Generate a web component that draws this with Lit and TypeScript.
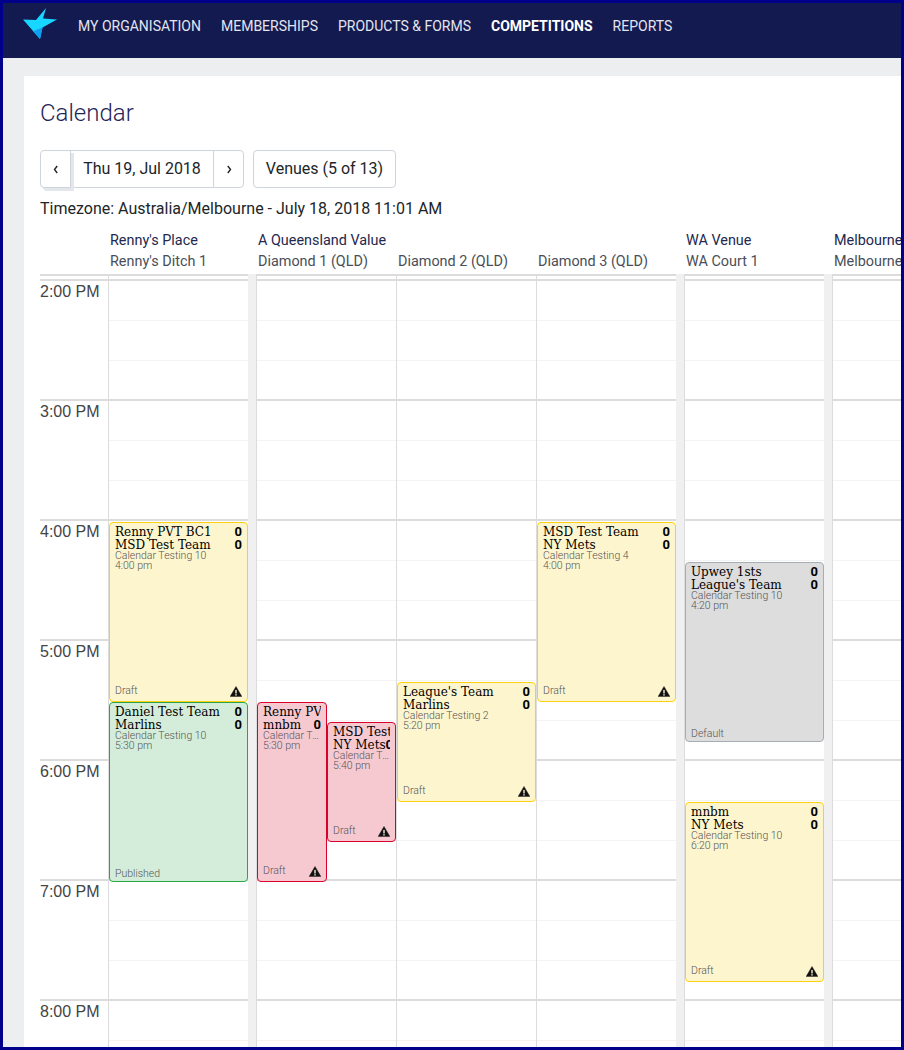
import { LitElement, html, css, svg } from "lit";
import { customElement } from "lit/decorators.js";

type CalEvent = {
  home: string;
  away: string;
  division: string;
  time: string;
  status: string;
  kind: "draft" | "published" | "clash" | "default";
  top: number;
  height: number;
  left?: number;
  width?: number;
  warn?: boolean;
};

type Court = { venue: string; name: string; gap?: boolean; events: CalEvent[] };

const courts: Court[] = [
  {
    venue: "Renny's Place",
    name: "Renny's Ditch 1",
    gap: true,
    events: [
      { home: "Renny PVT BC1", away: "MSD Test Team", division: "Calendar Testing 10", time: "4:00 pm", status: "Draft", kind: "draft", top: 241, height: 180, warn: true },
      { home: "Daniel Test Team", away: "Marlins", division: "Calendar Testing 10", time: "5:30 pm", status: "Published", kind: "published", top: 421, height: 180 },
    ],
  },
  {
    venue: "A Queensland Value",
    name: "Diamond 1 (QLD)",
    events: [
      { home: "Renny PVT BC1", away: "mnbm", division: "Calendar Testing 10", time: "5:30 pm", status: "Draft", kind: "clash", top: 421, height: 180, width: 70, warn: true },
      { home: "MSD Test Team", away: "NY Mets", division: "Calendar Testing 10", time: "5:40 pm", status: "Draft", kind: "clash", top: 441, height: 120, left: 70, width: 69, warn: true },
    ],
  },
  {
    venue: "",
    name: "Diamond 2 (QLD)",
    events: [
      { home: "League's Team", away: "Marlins", division: "Calendar Testing 2", time: "5:20 pm", status: "Draft", kind: "draft", top: 401, height: 120, warn: true },
    ],
  },
  {
    venue: "",
    name: "Diamond 3 (QLD)",
    gap: true,
    events: [
      { home: "MSD Test Team", away: "NY Mets", division: "Calendar Testing 4", time: "4:00 pm", status: "Draft", kind: "draft", top: 241, height: 180, warn: true },
    ],
  },
  {
    venue: "WA Venue",
    name: "WA Court 1",
    gap: true,
    events: [
      { home: "Upwey 1sts", away: "League's Team", division: "Calendar Testing 10", time: "4:20 pm", status: "Default", kind: "default", top: 281, height: 180 },
      { home: "mnbm", away: "NY Mets", division: "Calendar Testing 10", time: "6:20 pm", status: "Draft", kind: "draft", top: 521, height: 180, warn: true },
    ],
  },
  { venue: "Melbourne Sports Centre", name: "Melbourne Court 1", events: [] },
];

const hours = ["2:00 PM", "3:00 PM", "4:00 PM", "5:00 PM", "6:00 PM", "7:00 PM", "8:00 PM"];

const warnIcon = svg`<svg class="warn" viewBox="0 0 12 11" width="12" height="11"><path d="M6 .4 11.9 10.6H.1Z" fill="#111" stroke="#111" stroke-width=".4" stroke-linejoin="round"/><rect x="5.3" y="3.9" width="1.4" height="3.6" fill="#f3f0d8"/><rect x="5.3" y="8.2" width="1.4" height="1.4" fill="#f3f0d8"/></svg>`;

const chevron = (d: string) =>
  svg`<svg viewBox="0 0 6 9" width="6" height="9"><path d=${d} fill="none" stroke="#212529" stroke-width="1.4"/></svg>`;

@customElement("app-root")
class AppRoot extends LitElement {
  renderEvent(e: CalEvent) {
    const pos = `top:${e.top}px;height:${e.height}px;left:${e.left ?? 0}px;width:${e.width ?? 139}px`;
    return html`
      <div class="event ${e.kind}" style=${pos}>
        <div class="team"><span>${e.home}</span><b>0</b></div>
        <div class="team"><span>${e.away}</span><b>0</b></div>
        <div class="sub first">${e.division}</div>
        <div class="sub">${e.time}</div>
        <div class="foot ${e.warn ? "warned" : ""}"><span>${e.status}</span>${e.warn ? warnIcon : ""}</div>
      </div>
    `;
  }

  render() {
    return html`
      <div class="frame">
        <header>
          <svg class="logo" viewBox="0 0 36 34" width="36" height="34">
            <path d="M23 0 20 10.5 34 11.5 19.5 19.5 17 31 0 11.5 13 12Z" fill="#17d6ff" />
            <path d="M19.5 19.5 17 31 10 23.2Z" fill="#0e9ff2" />
          </svg>
          <nav>
            <a>MY ORGANISATION</a>
            <a>MEMBERSHIPS</a>
            <a>PRODUCTS &amp; FORMS</a>
            <a class="on">COMPETITIONS</a>
            <a>REPORTS</a>
          </nav>
        </header>
        <main>
          <section class="card">
            <h1>Calendar</h1>
            <div class="toolbar">
              <div class="group">
                <button class="arrow first">${chevron("M4.2 1 1.5 4.5 4.2 8")}</button>
                <button class="date">Thu 19, Jul 2018</button>
                <button class="arrow">${chevron("M1.8 1 4.5 4.5 1.8 8")}</button>
              </div>
              <button class="venues">Venues (5 of 13)</button>
            </div>
            <div class="tz">Timezone: Australia/Melbourne - July 18, 2018 11:01 AM</div>
            <div class="heads">
              <div class="corner"></div>
              ${courts.map(
                (c) => html`
                  <div class="head ${c.gap ? "gap" : ""}">
                    <div class="venue">${c.venue}</div>
                    <div class="court">${c.name}</div>
                  </div>
                `
              )}
            </div>
            <div class="grid">
              <div class="times">
                ${hours.map((h) => html`<div class="hour">${h}</div>`)}
              </div>
              ${courts.map(
                (c) => html`
                  <div class="col ${c.gap ? "gap" : ""}">
                    <div class="body">
                      ${hours.map(
                        () => html`<div class="slot"></div><div class="slot"></div><div class="slot"></div>`
                      )}
                      ${c.events.map((e) => this.renderEvent(e))}
                    </div>
                  </div>
                `
              )}
            </div>
          </section>
        </main>
      </div>
    `;
  }

  static styles = css`
    :host {
      display: block;
      font-family: Roboto, "Liberation Sans", sans-serif;
      color: #212529;
    }
    .frame {
      box-sizing: border-box;
      width: 904px;
      height: 1050px;
      border: 3px solid #00008b;
      background: #edeef0;
      overflow: hidden;
    }
    header {
      height: 55px;
      background: #131a50;
      display: flex;
      align-items: flex-start;
      padding-left: 20px;
    }
    .logo {
      margin-top: 5px;
      flex: none;
    }
    nav {
      display: flex;
      gap: 20px;
      margin-left: 19px;
      padding-top: 15px;
      font-size: 14px;
      line-height: 17px;
      color: #e4e5ee;
      white-space: nowrap;
    }
    nav a.on {
      font-weight: 700;
      color: #fff;
    }
    main {
      padding: 18px 0 0 21px;
    }
    .card {
      background: #fff;
      padding: 0 0 0 16px;
      height: 1000px;
      overflow: hidden;
    }
    h1 {
      margin: 0;
      padding-top: 22px;
      font-size: 24px;
      line-height: 30px;
      font-weight: 300;
      color: #1f2557;
    }
    .toolbar {
      display: flex;
      gap: 9px;
      margin-top: 22px;
    }
    .group {
      display: flex;
    }
    button {
      font: inherit;
      font-size: 16px;
      line-height: 20px;
      color: #212529;
      background: #fff;
      border: 1px solid #ced4da;
      height: 38px;
      padding: 0;
    }
    .arrow {
      width: 31px;
      margin-left: -1px;
      border-radius: 0 4px 4px 0;
      display: flex;
      align-items: center;
      justify-content: center;
    }
    .arrow.first {
      margin-left: 0;
      border-radius: 4px 0 0 4px;
      position: relative;
      z-index: 1;
      box-shadow: 3px 3px 0 #e3e6ea;
    }
    .date {
      width: 144px;
      margin-left: -1px;
      border-radius: 0;
    }
    .venues {
      width: 143px;
      border-radius: 4px;
    }
    .tz {
      margin-top: 11px;
      font-size: 16px;
      line-height: 20px;
    }
    .heads {
      display: flex;
      margin-top: 10px;
      height: 47px;
      box-sizing: border-box;
      border-bottom: 2px solid #dcdcdc;
      white-space: nowrap;
    }
    .corner {
      flex: none;
      width: 70px;
    }
    .head {
      flex: none;
      width: 140px;
      font-size: 14.4px;
      line-height: 21px;
      box-sizing: border-box;
      padding-top: 1px;
    }
    .head.gap {
      width: 148px;
    }
    .venue {
      height: 21px;
      color: #23284e;
    }
    .court {
      color: #4a4f57;
    }
    .grid {
      display: flex;
      margin-top: 3px;
      border-top: 2px solid #dcdcdc;
    }
    .times {
      flex: none;
      width: 68px;
    }
    .hour {
      height: 120px;
      box-sizing: border-box;
      padding: 1px 9px 0 0;
      text-align: right;
      white-space: nowrap;
      font-family: "Liberation Sans", sans-serif;
      font-size: 16px;
      line-height: 20px;
      color: #444;
      border-bottom: 2px solid #dcdcdc;
    }
    .col {
      flex: none;
      width: 140px;
      margin-top: -7px;
      padding-top: 7px;
      border-left: 1px solid #dcdcdc;
      box-sizing: border-box;
    }
    .col.gap {
      width: 148px;
      border-right: 8px solid #f0f0f0;
    }
    .body {
      position: relative;
      width: 139px;
    }
    .slot {
      height: 40px;
      box-sizing: border-box;
      border-bottom: 1px solid #f4f4f4;
    }
    .slot:nth-child(3n) {
      border-bottom: 2px solid #dcdcdc;
    }
    .event {
      position: absolute;
      box-sizing: border-box;
      border: 1px solid;
      border-radius: 4px;
      padding: 3px 5px 0 5px;
      display: flex;
      flex-direction: column;
      overflow: hidden;
    }
    .draft {
      background: #fdf5cd;
      border-color: #ffd00f;
    }
    .published {
      background: #d4edda;
      border-color: #28a745;
    }
    .clash {
      background: #f6c9d1;
      border-color: #d9002c;
    }
    .default {
      background: #dddddd;
      border-color: #a5adb5;
    }
    .team {
      display: flex;
      justify-content: space-between;
      align-items: flex-start;
      overflow: hidden;
      font-family: "DejaVu Serif", "Liberation Serif", serif;
      font-size: 12px;
      line-height: 13px;
      color: #000;
      white-space: nowrap;
    }
    .team span,
    .team b {
      flex: none;
    }
    .team b {
      font-family: Roboto, sans-serif;
      font-size: 13px;
      line-height: 12px;
    }
    .sub {
      font-size: 10.5px;
      font-weight: 300;
      line-height: 10px;
      color: #555;
      white-space: nowrap;
      overflow: hidden;
      text-overflow: ellipsis;
    }
    .sub.first {
      margin-top: -1px;
    }
    .foot {
      margin-top: auto;
      display: flex;
      justify-content: space-between;
      align-items: flex-end;
      font-size: 10.5px;
      font-weight: 300;
      line-height: 14px;
      color: #555;
    }
    .foot.warned span {
      margin-bottom: 3px;
    }
    .warn {
      margin-bottom: 4px;
    }
  `;
}

export default AppRoot;
